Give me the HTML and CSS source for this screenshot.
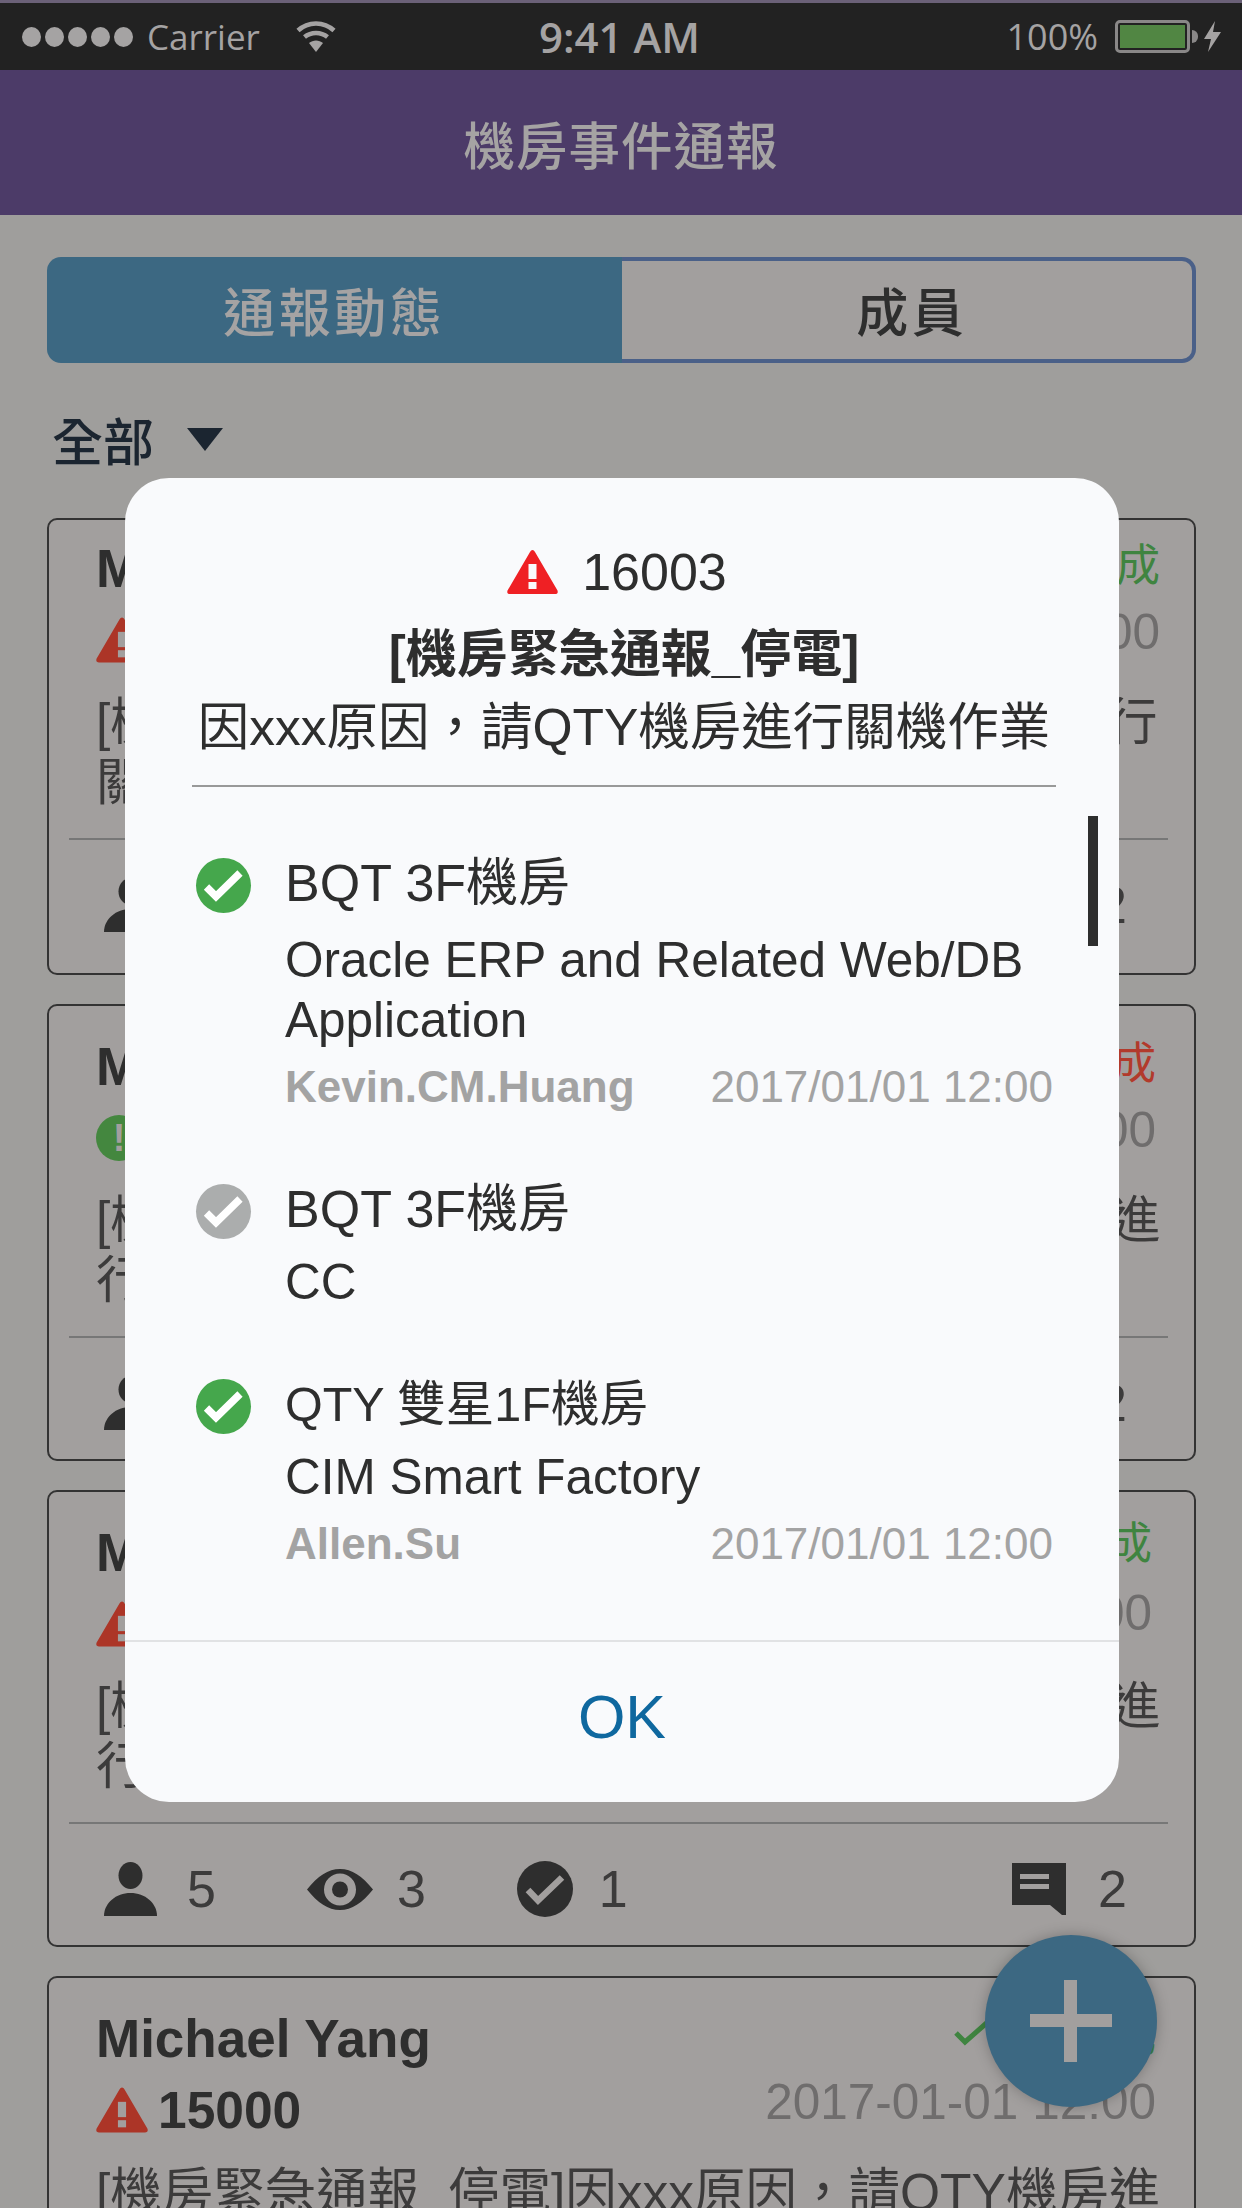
FILE: index.html
```html
<!DOCTYPE html>
<html lang="zh-Hant">
<head>
    <meta charset="UTF-8">
    <meta name="viewport" content="width=device-width, initial-scale=1.0">
    <title>機房事件通報</title>
    <link rel="stylesheet" href="styles.css">
</head>
<body>
    <svg class="icon-defs" width="0" height="0">
        <defs>
            <symbol id="i-warn" viewBox="0 0 51 44">
                <path d="M25.500 0 Q27 0 28 2 L50.500 40.500 Q51.500 44 48 44 L3 44 Q-.5 44 .5 40.500 L23 2 Q24 0 25.500 0 Z" fill="currentColor"/>
                <rect x="21.500" y="14" width="8" height="15" fill="var(--mark)"/>
                <rect x="21.500" y="32" width="8" height="7" fill="var(--mark)"/>
            </symbol>
            <symbol id="i-person" viewBox="0 0 53 54">
                <ellipse cx="26.500" cy="13.500" rx="12" ry="13.500"/>
                <path d="M0 54 C0 41 12 31 26.500 31 C41 31 53 41 53 54 Z"/>
            </symbol>
            <symbol id="i-eye" viewBox="0 0 66 41">
                <path fill-rule="evenodd" d="M0 20.500 C11 7 21 0 33 0 C45 0 55 7 66 20.500 C55 34 45 41 33 41 C21 41 11 34 0 20.500 Z M17 20.500 a16 16 0 1 0 32 0 a16 16 0 1 0 -32 0 Z"/>
                <circle cx="33" cy="20.500" r="8"/>
            </symbol>
            <symbol id="i-check" viewBox="0 0 56 56">
                <circle cx="28" cy="28" r="28"/>
                <path d="M11 29 L21 39.500 L45 16.500" fill="none" stroke="#a29f9e" stroke-width="6.500"/>
            </symbol>
            <symbol id="i-comment" viewBox="0 0 54 52">
                <path fill-rule="evenodd" d="M0 0 H54 V52 H50 L38 42 H0 Z M8 11 V16 H37 V11 Z M8 21 V26 H37 V21 Z"/>
            </symbol>
            <symbol id="i-tick" viewBox="0 0 55 55">
                <path d="M10.500 29 L20 38.500 L44 15" fill="none" stroke="#fff" stroke-width="7.500"/>
            </symbol>
            <symbol id="i-done" viewBox="0 0 38 28">
                <path d="M2 15 L11 24 L36 2" fill="none" stroke="currentColor" stroke-width="5"/>
            </symbol>
        </defs>
    </svg>

    <div class="phone">
        <div class="status-bar">
            <div class="status-left">
                <span class="dots"><i></i><i></i><i></i><i></i><i></i></span>
                <span class="carrier">Carrier</span>
                <svg class="wifi" viewBox="0 0 40 31" width="40" height="31">
                    <path d="M2 9.500 C12 0 28 0 38 9.500" fill="none" stroke="#a5a3a3" stroke-width="4.500"/>
                    <path d="M8.500 16 C15 10.500 25 10.500 31.500 16" fill="none" stroke="#a5a3a3" stroke-width="4.500"/>
                    <path d="M13 22 C17 18.500 23 18.500 27 22 L20 31 Z" fill="#a5a3a3"/>
                </svg>
            </div>
            <div class="status-time">9:41 AM</div>
            <div class="status-right">
                <span>100%</span>
                <span class="battery"><i></i></span>
                <svg class="bolt" viewBox="0 0 17 31" width="17" height="31">
                    <path d="M11 0 L0 18 H7 L4 31 L17 11 H9 Z" fill="#a5a3a3"/>
                </svg>
            </div>
        </div>

        <header class="app-header">機房事件通報</header>

        <main class="content">
            <div class="tabs">
                <div class="tab tab-active">通報動態</div>
                <div class="tab tab-plain">成員</div>
            </div>

            <div class="filter">全部<span class="caret"></span></div>

            <div class="card card-first">
                <div class="card-top">
                    <span class="card-name">Michael Yang</span>
                    <span class="card-state state-done"><svg class="done-tick"><use href="#i-done"/></svg>已完成</span>
                </div>
                <div class="card-top">
                    <span class="card-no"><svg class="warn warn-red"><use href="#i-warn"/></svg>15000</span>
                    <span class="card-date">2017-01-01 12:00</span>
                </div>
                <p class="card-text">[機房緊急通報停電]因xx原因，請QTY機房進行關機作業</p>
                <div class="card-stats">
                    <span class="stat stat-person"><svg><use href="#i-person"/></svg>5</span>
                    <span class="stat stat-eye"><svg><use href="#i-eye"/></svg>3</span>
                    <span class="stat stat-check"><svg><use href="#i-check"/></svg>1</span>
                    <span class="stat stat-comment"><svg><use href="#i-comment"/></svg>2</span>
                </div>
            </div>

            <div class="card">
                <div class="card-top">
                    <span class="card-name">Michael Yang</span>
                    <span class="card-state state-todo">未完成</span>
                </div>
                <div class="card-top">
                    <span class="card-no"><span class="badge-green">!</span>15000</span>
                    <span class="card-date">2017-01-01 12:00</span>
                </div>
                <p class="card-text">[機房緊急通報_停電]因xxx原因，請QTY機房進行關機作業</p>
                <div class="card-stats">
                    <span class="stat stat-person"><svg><use href="#i-person"/></svg>5</span>
                    <span class="stat stat-eye"><svg><use href="#i-eye"/></svg>3</span>
                    <span class="stat stat-check"><svg><use href="#i-check"/></svg>1</span>
                    <span class="stat stat-comment"><svg><use href="#i-comment"/></svg>2</span>
                </div>
            </div>

            <div class="card card-third">
                <div class="card-top">
                    <span class="card-name">Michael Yang</span>
                    <span class="card-state state-done"><svg class="done-tick"><use href="#i-done"/></svg>已完成</span>
                </div>
                <div class="card-top">
                    <span class="card-no"><svg class="warn warn-red"><use href="#i-warn"/></svg>15000</span>
                    <span class="card-date">2017-01-01 12:00</span>
                </div>
                <p class="card-text">[機房緊急通報_停電]因xxx原因，請QTY機房進行關機作業</p>
                <div class="card-stats">
                    <span class="stat stat-person"><svg><use href="#i-person"/></svg>5</span>
                    <span class="stat stat-eye"><svg><use href="#i-eye"/></svg>3</span>
                    <span class="stat stat-check"><svg><use href="#i-check"/></svg>1</span>
                    <span class="stat stat-comment"><svg><use href="#i-comment"/></svg>2</span>
                </div>
            </div>

            <div class="card">
                <div class="card-top">
                    <span class="card-name">Michael Yang</span>
                    <span class="card-state state-done"><svg class="done-tick"><use href="#i-done"/></svg>已完成</span>
                </div>
                <div class="card-top">
                    <span class="card-no"><svg class="warn warn-red"><use href="#i-warn"/></svg>15000</span>
                    <span class="card-date">2017-01-01 12:00</span>
                </div>
                <p class="card-text">[機房緊急通報_停電]因xxx原因，請QTY機房進行關機作業</p>
            </div>
        </main>

        <div class="fab"></div>

        <!-- Alert dialog on top of the dimmed list -->
        <div class="modal">
            <div class="modal-head">
                <div class="modal-no"><svg class="warn warn-bright"><use href="#i-warn"/></svg>16003</div>
                <div class="modal-title">[機房緊急通報_停電]</div>
                <div class="modal-desc">因xxx原因，請QTY機房進行關機作業</div>
            </div>

            <div class="modal-list">
                <div class="scroll-thumb"></div>

                <div class="room room-first">
                    <svg class="room-dot dot-green"><use href="#i-tick"/></svg>
                    <div class="room-body">
                        <div class="room-name">BQT 3F機房</div>
                        <div class="room-system">Oracle ERP and Related Web/DB Application</div>
                        <div class="room-foot">
                            <span class="room-user">Kevin.CM.Huang</span>
                            <span class="room-date">2017/01/01 12:00</span>
                        </div>
                    </div>
                </div>

                <div class="room">
                    <svg class="room-dot dot-grey"><use href="#i-tick"/></svg>
                    <div class="room-body">
                        <div class="room-name">BQT 3F機房</div>
                        <div class="room-system">CC</div>
                    </div>
                </div>

                <div class="room">
                    <svg class="room-dot dot-green"><use href="#i-tick"/></svg>
                    <div class="room-body">
                        <div class="room-name room-name-small">QTY 雙星1F機房</div>
                        <div class="room-system">CIM Smart Factory</div>
                        <div class="room-foot">
                            <span class="room-user">Allen.Su</span>
                            <span class="room-date">2017/01/01 12:00</span>
                        </div>
                    </div>
                </div>
            </div>

            <div class="modal-ok">OK</div>
        </div>
    </div>
</body>
</html>
```

FILE: styles.css
```css
/* Reset */
* {
    margin: 0;
    padding: 0;
    box-sizing: border-box;
}

body {
    background: #9f9e9c;
    font-family: "Liberation Sans", "Noto Sans CJK TC", sans-serif;
    color: #2e2e2e;
}

.icon-defs {
    position: absolute;
}

.phone {
    position: relative;
    width: 1242px;
    height: 2208px;
    overflow: hidden;
}

/* Status bar */
.status-bar {
    height: 70px;
    padding: 0 21px 0 22px;
    background: #222222;
    border-top: 3px solid #6b6178;
    color: #a5a3a3;
    font-family: "Open Sans", sans-serif;
    font-size: 35px;
    display: grid;
    grid-template-columns: 1fr auto 1fr;
    align-items: center;
}

.status-left {
    display: flex;
    align-items: center;
}

.dots {
    display: flex;
    gap: 4px;
    margin-right: 14px;
}

.dots i {
    width: 19px;
    height: 20px;
    border-radius: 50%;
    background: #a5a3a3;
}

.wifi {
    margin-left: 36px;
}

.status-time {
    margin-right: 4px;
    font-weight: 600;
    font-size: 42px;
}

.status-right {
    display: flex;
    align-items: center;
    justify-content: flex-end;
    font-size: 36px;
}

.battery {
    position: relative;
    width: 75px;
    height: 33px;
    margin: 0 14px 0 17px;
    padding: 2px;
    border: 3px solid #8a8888;
    border-radius: 5px;
}

.battery::after {
    content: "";
    position: absolute;
    right: -11px;
    top: 7px;
    width: 6px;
    height: 13px;
    background: #8a8888;
    border-radius: 0 6px 6px 0;
}

.battery i {
    display: block;
    height: 100%;
    background: #518643;
}

/* Header */
.app-header {
    height: 145px;
    background: #4c3b68;
    color: #a5a3a3;
    font-size: 51.500px;
    font-weight: 500;
    letter-spacing: 1px;
    display: flex;
    align-items: center;
    justify-content: center;
}

.content {
    padding: 42px 46px 0 47px;
}

/* Tabs */
.tabs {
    display: flex;
    height: 106px;
}

.tab {
    width: 50%;
    padding-bottom: 2px;
    display: flex;
    align-items: center;
    justify-content: center;
    font-size: 52px;
    font-weight: 500;
    letter-spacing: 3.5px;
}

.tab-active {
    background: #3c6882;
    color: #a5a3a3;
    border-radius: 14px 0 0 14px;
}

.tab-plain {
    padding-left: 10px;
    background: #a29f9e;
    border: 4px solid #4a6088;
    border-left: none;
    border-radius: 0 14px 14px 0;
}

.filter {
    margin-top: 46px;
    padding-left: 5px;
    height: 60px;
    font-size: 51px;
    color: #1b2530;
    display: flex;
    align-items: center;
    font-weight: 500;
}

.caret {
    margin-left: 33px;
    border-left: 18px solid transparent;
    border-right: 18px solid transparent;
    border-top: 23px solid #1b2530;
}

/* Event cards */
.card {
    margin-top: 29px;
    height: 457px;
    padding: 24px 26px 0 20px;
    background: #a29f9e;
    border: 2px solid #333333;
    border-radius: 10px;
}

.card-first {
    margin-top: 49px;
    padding-top: 12px;
}

.card-top {
    display: flex;
    justify-content: space-between;
    align-items: center;
    height: 72px;
    padding: 0 12px 0 27px;
}

.card-first .card-top {
    padding-right: 8px;
}

.card-third .card-top {
    padding-right: 16px;
}

.card-name {
    font-size: 53px;
    font-weight: 700;
}

.card-state {
    margin-bottom: 12px;
    font-size: 44px;
    display: flex;
    align-items: center;
}

.done-tick {
    width: 38px;
    height: 28px;
    margin-right: 32px;
}

.state-done {
    color: #3f8440;
}

.state-todo {
    color: #b23a2c;
}

.card-no {
    font-size: 51.500px;
    font-weight: 700;
    display: flex;
    align-items: center;
}

.warn {
    width: 52px;
    height: 46px;
    margin-right: 10px;
}

.warn-red {
    color: #ac3527;
    --mark: #a29f9e;
}

.badge-green {
    width: 46px;
    height: 46px;
    margin-right: 10px;
    border-radius: 50%;
    background: #44873f;
    color: #a29f9e;
    font-size: 38px;
    text-align: center;
    line-height: 46px;
}

.card-date {
    margin-bottom: 18px;
    font-size: 49.500px;
    color: #6f6d6d;
}

.card-third .card-state, .card-third .card-date {
    margin-bottom: 24px;
}

.card-text {
    margin: 16px -10px 0 27px;
    font-size: 51.500px;
    line-height: 60px;
    color: #3c3b3b;
}

.card-stats {
    display: flex;
    align-items: center;
    gap: 91px;
    margin-top: 26px;
    padding: 35px 41px 0 35px;
    border-top: 2px solid #777777;
    font-size: 52px;
    color: #3c3b3b;
}

.stat {
    display: flex;
    align-items: center;
}

.stat svg {
    fill: #2e2e2e;
}

.stat-person svg {
    width: 53px;
    height: 54px;
    margin-right: 30px;
}

.stat-eye svg {
    width: 66px;
    height: 41px;
    margin-right: 24px;
}

.stat-check svg {
    width: 56px;
    height: 56px;
    margin-right: 26px;
}

.stat-comment {
    margin-left: auto;
}

.stat-comment svg {
    width: 54px;
    height: 52px;
    margin-right: 32px;
}

/* Floating add button */
.fab {
    position: absolute;
    left: 985px;
    top: 1935px;
    width: 172px;
    height: 172px;
    border-radius: 50%;
    background: #3c6882;
    box-shadow: 0 0 14px rgba(0, 0, 0, 0.25);
}

.fab::before, .fab::after {
    content: "";
    position: absolute;
    background: #a29f9e;
}

.fab::before {
    left: 45px;
    top: 79px;
    width: 82px;
    height: 13px;
}

.fab::after {
    left: 79px;
    top: 45px;
    width: 13px;
    height: 82px;
}

/* Dialog */
.modal {
    position: absolute;
    left: 125px;
    top: 478px;
    width: 994px;
    height: 1324px;
    background: #f9fafc;
    border-radius: 44px;
    display: flex;
    flex-direction: column;
    overflow: hidden;
}

.modal-head {
    margin: 0 63px 0 67px;
    padding-top: 64px;
    height: 309px;
    border-bottom: 2px solid #999999;
    text-align: center;
    font-size: 52px;
    line-height: 60px;
}

.modal-no {
    display: flex;
    align-items: center;
    justify-content: center;
    height: 60px;
    padding-right: 14px;
}

.warn-bright {
    width: 51px;
    height: 44px;
    margin-right: 24px;
    color: #ef2024;
    --mark: #f9fafc;
}

.modal-title {
    margin-top: 23px;
    font-size: 51px;
    font-weight: 700;
}

.modal-desc {
    margin-top: 12px;
    font-size: 51.500px;
    white-space: nowrap;
}

.modal-list {
    position: relative;
    flex: 1;
    padding: 66px 66px 0 71px;
    overflow: hidden;
}

.scroll-thumb {
    position: absolute;
    right: 21px;
    top: 29px;
    width: 10px;
    height: 130px;
    background: #2e2e2e;
}

.room {
    display: flex;
    gap: 34px;
    margin-bottom: 62px;
}

.room-dot {
    flex: none;
    width: 55px;
    height: 55px;
    margin-top: 5px;
    border-radius: 50%;
}

.dot-green {
    background: #45a74c;
}

.dot-grey {
    background: #abadad;
}

.room-body {
    flex: 1;
}

.room-name {
    font-size: 52px;
    line-height: 60px;
}

.room-name-small {
    font-size: 48.500px;
}

.room-system {
    margin-top: 13px;
    font-size: 49.500px;
    line-height: 60px;
}

.room-first .room-system {
    margin-top: 17px;
}

.room-foot {
    display: flex;
    justify-content: space-between;
    align-items: center;
    margin-top: 7px;
    height: 60px;
    font-size: 44px;
    color: #a3a3a3;
}

.room-user {
    font-weight: 700;
}

.modal-ok {
    height: 162px;
    padding-bottom: 10px;
    border-top: 2px solid #e1e2e4;
    color: #0f689f;
    font-size: 61px;
    display: flex;
    align-items: center;
    justify-content: center;
}
```
